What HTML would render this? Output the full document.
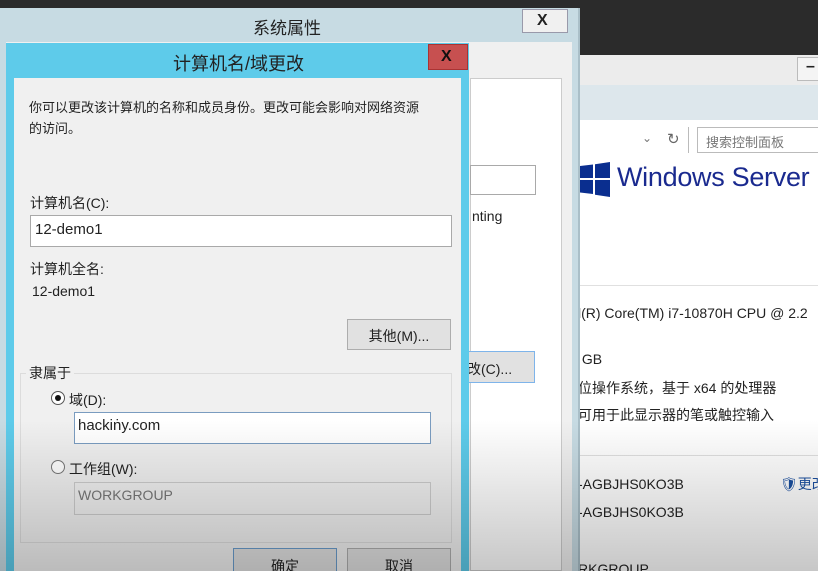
<!DOCTYPE html>
<html><head><meta charset="utf-8"><style>
*{margin:0;padding:0;box-sizing:border-box}
html,body{width:818px;height:571px;overflow:hidden}
body{background:#2b2b2b;position:relative;font-family:"Liberation Sans","Noto Sans CJK SC",sans-serif;font-size:14px;color:#222}
.a{position:absolute}
.t{position:absolute;white-space:nowrap}
.inp{position:absolute;background:#fff;border:1px solid #a9a9a9}
.btn{position:absolute;background:#e1e1e1;border:1px solid #adadad;text-align:center;font-size:14px}
</style></head><body>
<div class="a" style="left:578px;top:55px;width:240px;height:516px;background:#fff"></div>
<div class="a" style="left:578px;top:55px;width:240px;height:30px;background:#ececec"></div>
<div class="a" style="left:797px;top:57px;width:30px;height:24px;background:#f4f4f4;border:1px solid #bbb"></div>
<div class="t" style="left:806px;top:58px;font-size:16px;font-weight:bold">–</div>
<div class="a" style="left:578px;top:85px;width:240px;height:35px;background:#dde7ec"></div>
<div class="t" style="left:642px;top:131px;font-size:12px;color:#777">⌄</div>
<div class="t" style="left:667px;top:130px;font-size:15px;color:#666">↻</div>
<div class="a" style="left:688px;top:127px;width:1px;height:26px;background:#bbb"></div>
<div class="inp" style="left:697px;top:127px;width:130px;height:26px;border-color:#bbb"></div>
<div class="t" style="left:706px;top:132px;font-size:13px;color:#777">搜索控制面板</div>
<svg class="a" style="left:578px;top:162px" width="34" height="36" viewBox="0 0 34 36"><path d="M2 4 L15 2.5 V16 H2Z M17 2.3 L32 0 V16 H17Z M2 18 H15 V32 L2 30.5Z M17 18 H32 V35 L17 32.7Z" fill="#0a2e8f"/></svg>
<div class="t" style="left:617px;top:162px;font-size:27px;color:#1a2a8f;letter-spacing:-0.3px">Windows Server</div>
<div class="a" style="left:578px;top:285px;width:240px;height:1px;background:#e0e0e0"></div>
<div class="t" style="left:578px;top:305px;font-size:14px">l(R) Core(TM) i7-10870H CPU @ 2.2</div>
<div class="t" style="left:578px;top:351px;font-size:14px">&nbsp;GB</div>
<div class="t" style="left:578px;top:378px;font-size:14px">位操作系统，基于 x64 的处理器</div>
<div class="t" style="left:578px;top:405px;font-size:14px">可用于此显示器的笔或触控输入</div>
<div class="a" style="left:578px;top:455px;width:240px;height:1px;background:#e0e0e0"></div>
<div class="t" style="left:578px;top:476px;font-size:14px">-AGBJHS0KO3B</div>
<div class="t" style="left:578px;top:504px;font-size:14px">-AGBJHS0KO3B</div>
<div class="t" style="left:578px;top:561px;font-size:14px">RKGROUP</div>
<div class="t" style="left:780px;top:474px;font-size:14px;color:#1a4fa0">🛡更改</div>
<div class="a" style="left:0;top:8px;width:580px;height:563px;background:#c7dbe3;border-right:2px solid #aabfc8"></div>
<div class="t" style="left:253px;top:14px;font-size:17px;color:#222">系统属性</div>
<div class="a" style="left:522px;top:9px;width:46px;height:24px;background:#f0f0f0;border:1px solid #99a"></div>
<div class="t" style="left:537px;top:12px;font-size:16px;font-weight:bold">X</div>
<div class="a" style="left:6px;top:42px;width:566px;height:529px;background:#f0f0f0"></div>
<div class="a" style="left:470px;top:78px;width:92px;height:493px;background:#fff;border:1px solid #ccc"></div>
<div class="inp" style="left:470px;top:165px;width:66px;height:30px"></div>
<div class="t" style="left:472px;top:208px;font-size:14px">nting</div>
<div class="btn" style="left:466px;top:351px;width:69px;height:32px;border-color:#7eb4ea;padding-top:7px;text-align:left">改(C)...</div>
<div class="a" style="left:6px;top:43px;width:463px;height:528px;background:#5ecbea"></div>
<div class="t" style="left:173px;top:50px;font-size:18px;color:#222">计算机名/域更改</div>
<div class="a" style="left:428px;top:44px;width:40px;height:26px;background:#c75050;border:1px solid #a33"></div>
<div class="t" style="left:441px;top:48px;font-size:16px;font-weight:bold;color:#111">X</div>
<div class="a" style="left:14px;top:78px;width:447px;height:493px;background:#f0f0f0"></div>
<div class="t" style="left:29px;top:97px;font-size:13px">你可以更改该计算机的名称和成员身份。更改可能会影响对网络资源</div>
<div class="t" style="left:29px;top:118px;font-size:13px">的访问。</div>
<div class="t" style="left:30px;top:193px;font-size:14px">计算机名(C):</div>
<div class="inp" style="left:30px;top:215px;width:422px;height:32px"></div>
<div class="t" style="left:35px;top:221px;font-size:15px">12-demo1</div>
<div class="t" style="left:30px;top:259px;font-size:14px">计算机全名:</div>
<div class="t" style="left:32px;top:283px;font-size:14px">12-demo1</div>
<div class="btn" style="left:347px;top:319px;width:104px;height:31px;padding-top:6px">其他(M)...</div>
<div class="a" style="left:20px;top:373px;width:432px;height:170px;border:1px solid #dcdcdc"></div>
<div class="t" style="left:26px;top:363px;font-size:14px;background:#f0f0f0;padding:0 3px">隶属于</div>
<div class="a" style="left:51px;top:391px;width:14px;height:14px;border:1px solid #555;border-radius:50%;background:#fff"></div>
<div class="a" style="left:55px;top:395px;width:6px;height:6px;border-radius:50%;background:#111"></div>
<div class="t" style="left:69px;top:390px;font-size:14px">域(D):</div>
<div class="inp" style="left:74px;top:412px;width:357px;height:32px;border-color:#7a9cc0"></div>
<div class="t" style="left:78px;top:417px;font-size:15px">hackiṅy.com</div>
<div class="a" style="left:51px;top:460px;width:14px;height:14px;border:1px solid #777;border-radius:50%;background:#fff"></div>
<div class="t" style="left:69px;top:459px;font-size:14px">工作组(W):</div>
<div class="inp" style="left:74px;top:482px;width:357px;height:33px;background:#f0f0f0;border-color:#ccc"></div>
<div class="t" style="left:78px;top:487px;font-size:14px;color:#777">WORKGROUP</div>
<div class="btn" style="left:233px;top:548px;width:104px;height:32px;border-color:#6a9ccc;padding-top:7px">确定</div>
<div class="btn" style="left:347px;top:548px;width:104px;height:32px;padding-top:7px">取消</div>
<div class="a" style="left:0;top:420px;width:818px;height:151px;background:linear-gradient(rgba(0,0,0,0),rgba(0,0,0,0.22))"></div>
</body></html>
